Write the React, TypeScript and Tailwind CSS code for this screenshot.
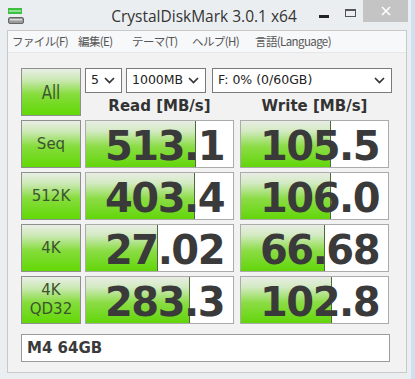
import React from "react";

const Chevron = () => (
  <svg width="11" height="7" viewBox="0 0 11 7" className="shrink-0">
    <polyline points="1,1 5.5,5.5 10,1" fill="none" stroke="#333" strokeWidth="1.7" />
  </svg>
);

const Select = ({ w, text }: { w: string; text: string }) => (
  <div className={`${w} h-[25px] bg-white border border-[#7a7a7a] flex items-center justify-between pl-[5px] pr-[6px]`}>
    <span className="text-[12.5px] text-[#222] font-['DejaVu_Sans',sans-serif] whitespace-nowrap">{text}</span>
    <Chevron />
  </div>
);

const Label = ({ children, big }: { children: React.ReactNode; big?: boolean }) => (
  <div className="w-[60px] h-[48px] shrink-0 border border-[#8f8f8f] bg-[linear-gradient(to_bottom,#e9eee6_0%,#c9e8b0_25%,#86dc3c_55%,#62d806_100%)] flex flex-col items-center justify-center text-[#3b5530] font-['DejaVu_Sans',sans-serif] leading-[19px]">
    {big ? <span className="text-[15px] scale-y-[1.35] inline-block">{children}</span> : <span className="text-[15px] text-center">{children}</span>}
  </div>
);

const Cell = ({ value, bar }: { value: string; bar: number }) => (
  <div className="w-[149px] h-[48px] shrink-0 border border-[#ababab] bg-white grid">
    <div
      className="col-start-1 row-start-1 h-full border-r border-[#4f6b3c] bg-[linear-gradient(to_bottom,#e8ede4_0%,#d3eac2_22%,#8bdc45_56%,#62d60a_100%)]"
      style={{ width: bar }}
    />
    <div className="col-start-1 row-start-1 flex items-center justify-end pr-[9px] pt-[3px]">
      <span className="font-['DejaVu_Sans',sans-serif] font-bold text-[40px] leading-none tracking-[-1.5px] text-[#3a3a3a]">{value}</span>
    </div>
  </div>
);

const rows = [
  { label: "Seq", r: "513.1", rb: 110, w: "105.5", wb: 90 },
  { label: "512K", r: "403.4", rb: 109, w: "106.0", wb: 90 },
  { label: "4K", r: "27.02", rb: 72, w: "66.68", wb: 84 },
  { label: "4K\nQD32", r: "283.3", rb: 104, w: "102.8", wb: 91 },
];

export default function App() {
  return (
    <div className="w-[415px] h-[379px] overflow-hidden bg-[linear-gradient(to_right,#ebeef1_411px,#cfe0f1_411px)] font-['DejaVu_Sans',sans-serif]">
      {/* title bar */}
      <div className="h-[30px] grid grid-cols-[1fr_auto_1fr] w-[408px]">
        <div className="flex items-start pl-[8px] pt-[7px]">
          <svg width="17" height="17" viewBox="0 0 17 17">
            <rect x="0" y="1" width="14" height="6" fill="#3fbf3f" />
            <rect x="1" y="3" width="12" height="2" fill="#8fe08f" />
            <rect x="0.5" y="10.5" width="15" height="6" rx="1.5" fill="#9a9a9a" stroke="#666" strokeWidth="1" />
            <rect x="2" y="12" width="12" height="1.5" fill="#d8d8d8" />
          </svg>
        </div>
        <div className="flex items-center pt-[4px] text-[15.5px] text-[#333] font-['Open_Sans',sans-serif] whitespace-nowrap">
          CrystalDiskMark 3.0.1 x64
        </div>
        <div className="flex justify-end items-start">
          <div className="w-[10px] h-[3px] bg-[#222] mt-[15px] mr-[16px]" />
          <div className="w-[11px] h-[8px] border border-[#555] border-t-2 mt-[9px] mr-[7px]" />
          <div className="w-[45px] h-[22px] bg-[#c4c4c4] flex items-center justify-center">
            <svg width="10" height="10" viewBox="0 0 10 10">
              <path d="M1 1 L9 9 M9 1 L1 9" stroke="#fff" strokeWidth="1.6" />
            </svg>
          </div>
        </div>
      </div>
      {/* client */}
      <div className="ml-[7px] w-[400px] h-[343px] border border-[#c9c9c9] bg-[#f2f2f2] flex flex-col">
        <div className="h-[22px] bg-[#f7f8f9] border-b border-[#e6e6e6] flex items-center text-[11.5px] tracking-[-0.6px] text-[#555] font-['Noto_Sans_CJK_JP','Noto_Sans',sans-serif] whitespace-nowrap pl-[4px]">
          <span className="w-[66px] shrink-0">ファイル(F)</span>
          <span className="w-[54px] shrink-0">編集(E)</span>
          <span className="w-[60px] shrink-0">テーマ(T)</span>
          <span className="w-[63px] shrink-0">ヘルプ(H)</span>
          <span>言語(Language)</span>
        </div>
        <div className="pl-[13px] pt-[15px] flex flex-col">
          <div className="flex gap-[4px]">
            <Label big>All</Label>
            <div className="flex flex-col">
              <div className="flex">
                <Select w="w-[37px]" text="5" />
                <div className="w-[4px]" />
                <Select w="w-[80px]" text="1000MB" />
                <div className="w-[6px]" />
                <Select w="w-[180px]" text="F: 0% (0/60GB)" />
              </div>
              <div className="flex gap-[6px] mt-[3px] h-[20px] items-center text-[15px] font-bold text-[#333]">
                <div className="w-[149px] text-center">Read [MB/s]</div>
                <div className="w-[149px] text-center">Write [MB/s]</div>
              </div>
            </div>
          </div>
          <div className="flex flex-col gap-[4px] mt-[4px]">
            {rows.map((r) => (
              <div key={r.label} className="flex">
                <Label>
                  {r.label.split("\n").map((l) => (
                    <span key={l} className="block">{l}</span>
                  ))}
                </Label>
                <div className="w-[4px]" />
                <Cell value={r.r} bar={r.rb} />
                <div className="w-[6px]" />
                <Cell value={r.w} bar={r.wb} />
              </div>
            ))}
          </div>
          <div className="mt-[10px] w-[369px] h-[28px] border border-[#9a9a9a] bg-white flex items-center pl-[5px] text-[15px] font-bold text-[#3a3a3a]">
            M4 64GB
          </div>
        </div>
      </div>
    </div>
  );
}
